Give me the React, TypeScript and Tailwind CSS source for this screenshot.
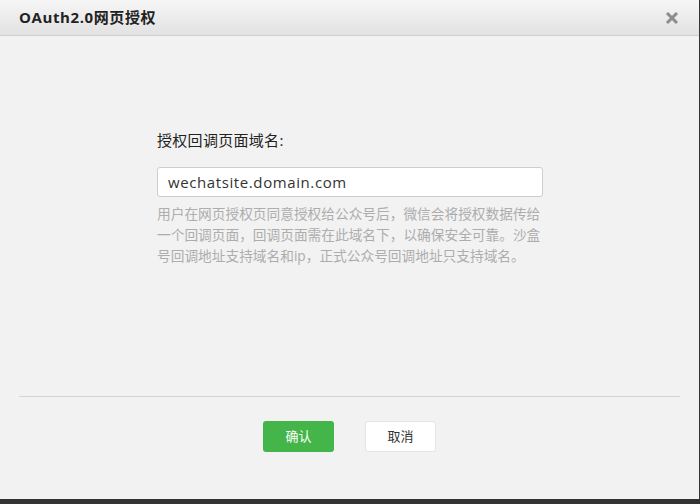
import React from "react";

const font = { fontFamily: '"Open Sans", "Noto Sans CJK SC", sans-serif' };

export default function App() {
  return (
    <div className="w-[700px] h-[504px] bg-[#333333] flex flex-col" style={font}>
      <div className="w-[699px] h-[499px] bg-[#f2f2f2] flex flex-col">
        <div className="h-[36px] shrink-0 flex items-center justify-between pl-[19px] pr-[20px] bg-gradient-to-b from-[#f6f6f6] to-[#e2e2e2] border-b border-[#cfcfcf]">
          <span className="text-[15px] font-bold text-[#222] tracking-[0.6px]">OAuth2.0网页授权</span>
          <svg width="14" height="14" viewBox="0 0 14 14" className="mt-[1px]">
            <path d="M2 2 L12 12 M12 2 L2 12" stroke="#8c8c8c" strokeWidth="3" strokeLinecap="butt" />
          </svg>
        </div>
        <div className="flex-1 flex flex-col">
          <div className="h-[360px] shrink-0 pl-[157px] pt-[93px]">
            <div className="text-[15px] text-[#222] leading-[22px] tracking-[0.3px]">授权回调页面域名:</div>
            <div className="mt-[16px] w-[386px] h-[30px] bg-white border border-[#cdcdcd] rounded-[3px] flex items-center pl-[10px] text-[15px] tracking-[0.6px] text-[#333]">
              wechatsite.domain.com
            </div>
            <div className="mt-[6px] w-[390px] text-[13.7px] leading-[21px] text-[#adadad] whitespace-nowrap">
              用户在网页授权页同意授权给公众号后，微信会将授权数据传给
              <br />
              一个回调页面，回调页面需在此域名下，以确保安全可靠。沙盒
              <br />
              号回调地址支持域名和ip，正式公众号回调地址只支持域名。
            </div>
          </div>
          <div className="mx-[19px] border-t border-[#d4d4d4]" />
          <div className="flex justify-center gap-[31px] pt-[24px]">
            <button className="w-[71px] h-[31px] rounded-[3px] bg-[#44b549] text-white text-[13px]">确认</button>
            <button className="w-[71px] h-[31px] rounded-[3px] bg-white border border-[#e4e4e4] text-[#333] text-[13px]">取消</button>
          </div>
        </div>
      </div>
    </div>
  );
}
